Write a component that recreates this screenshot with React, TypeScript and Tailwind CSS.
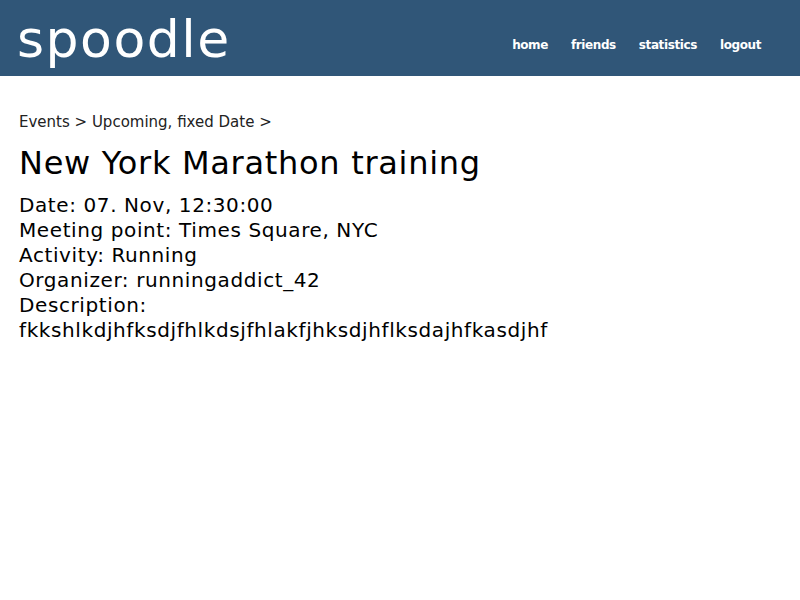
import React from 'react';

const links = ['home', 'friends', 'statistics', 'logout'];

const details = [
  'Date: 07. Nov, 12:30:00',
  'Meeting point: Times Square, NYC',
  'Activity: Running',
  'Organizer: runningaddict_42',
  'Description:',
  'fkkshlkdjhfksdjfhlkdsjfhlakfjhksdjhflksdajhfkasdjhf',
];

export default function App() {
  return (
    <div className="min-h-screen bg-white font-['DejaVu_Sans',Verdana,sans-serif] text-black">
      <header className="h-[76px] bg-[#305678] flex items-center justify-between pl-[17px] pr-[39px]">
        <h1 className="text-[52px] leading-none tracking-[1.5px] text-white pt-[2px]">spoodle</h1>
        <nav className="flex gap-[23px] text-[12px] tracking-[-0.4px] font-bold text-white pt-[13px]">
          {links.map((l) => (
            <a key={l} href="#">{l}</a>
          ))}
        </nav>
      </header>

      <main className="px-[19px] pt-[36px]">
        <p className="text-[15px] leading-[20px] text-[#222]">Events &gt; Upcoming, fixed Date &gt;</p>
        <h2 className="text-[32px] tracking-[0.7px] mt-[12px] leading-[38px]">New York Marathon training</h2>
        <div className="mt-[11px] text-[20px] tracking-[0.6px] leading-[25px]">
          {details.map((d) => (
            <div key={d}>{d}</div>
          ))}
        </div>
      </main>
    </div>
  );
}
